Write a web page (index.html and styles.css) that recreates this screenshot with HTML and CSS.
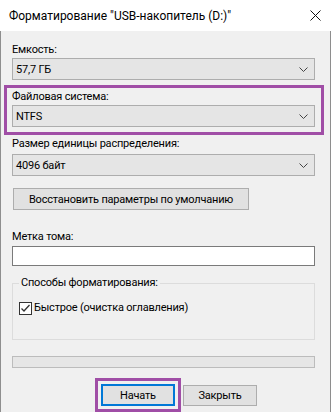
FILE: index.html
```html
<!doctype html>
<html lang="ru">
    <head>
        <title>Форматирование "USB-накопитель (D:)"</title>
        <meta name="viewport" content="width=device-width, initial-scale=1"/>
        <link rel="stylesheet" href="styles.css">
    </head>
    <body>
        <div class="window">
            <div class="titlebar">
                <span class="titlebar__text">Форматирование "USB-накопитель (D:)"</span>
                <svg class="titlebar__close" width="11" height="11" viewBox="0 0 11 11">
                    <path d="M0.5 0.5 L10.5 10.5 M10.5 0.5 L0.5 10.5" stroke="#111" stroke-width="1" fill="none"/>
                </svg>
            </div>
            <div class="dialog">
                <div class="field-label">Емкость:</div>
                <div class="combo">
                    <span>57,7 ГБ</span>
                    <svg class="combo__arrow" width="9" height="5" viewBox="0 0 9 5"><path d="M0.5 0.5 L4.5 4.5 L8.5 0.5" stroke="#444" fill="none"/></svg>
                </div>

                <div class="highlight highlight--group">
                    <div class="field-label">Файловая система:</div>
                    <div class="combo">
                        <span>NTFS</span>
                        <svg class="combo__arrow" width="9" height="5" viewBox="0 0 9 5"><path d="M0.5 0.5 L4.5 4.5 L8.5 0.5" stroke="#444" fill="none"/></svg>
                    </div>
                </div>

                <div class="field-label">Размер единицы распределения:</div>
                <div class="combo">
                    <span>4096 байт</span>
                    <svg class="combo__arrow" width="9" height="5" viewBox="0 0 9 5"><path d="M0.5 0.5 L4.5 4.5 L8.5 0.5" stroke="#444" fill="none"/></svg>
                </div>

                <button class="btn btn--defaults">Восстановить параметры по умолчанию</button>

                <div class="field-label field-label--volume">Метка тома:</div>
                <div class="textbox"></div>

                <fieldset class="group">
                    <legend>Способы форматирования:</legend>
                    <label class="check">
                        <svg class="check__box" width="13" height="13" viewBox="0 0 13 13">
                            <rect x="0.5" y="0.5" width="12" height="12" fill="#fff" stroke="#333"/>
                            <path d="M2.5 6.5 L5 9 L10.5 3" stroke="#333" stroke-width="1.3" fill="none"/>
                        </svg>
                        <span>Быстрое (очистка оглавления)</span>
                    </label>
                </fieldset>

                <div class="progress"></div>

                <div class="actions">
                    <div class="highlight highlight--btn">
                        <button class="btn btn--primary">Начать</button>
                    </div>
                    <button class="btn btn--close">Закрыть</button>
                </div>
            </div>
        </div>
    </body>
</html>
```

FILE: styles.css
```css
body {
    margin: 0;
    font-family: Roboto, "Noto Sans", sans-serif;
    font-size: 11px;
    letter-spacing: -0.2px;
    color: #000;
}
.window {
    width: 331px;
    height: 412px;
    display: flex;
    flex-direction: column;
}
.titlebar {
    height: 31px;
    flex: none;
    background-color: #fff;
    display: flex;
    align-items: center;
    padding: 0 10px 0 9px;
    box-sizing: border-box;
}
.titlebar__text {
    flex: 1;
    font-size: 12px;
    letter-spacing: 0;
    line-height: 16px;
}
.titlebar__close {
    display: block;
}
.dialog {
    flex: 1;
    background-color: #f0f0f0;
    border: 1px solid #8e8e8e;
    border-top: none;
    padding: 11px 15px 0 11px;
}
.field-label {
    line-height: 16px;
    height: 16px;
}
.combo {
    height: 22px;
    box-sizing: border-box;
    border: 1px solid #adadad;
    background-color: #e5e5e5;
    display: flex;
    align-items: center;
    padding: 0 6px 0 3px;
}
.combo span {
    flex: 1;
}
.combo__arrow {
    display: block;
}
.highlight {
    border: 3px solid #a04ea6;
}
.highlight--group {
    margin: 5px -9px 0 -8px;
    padding: 1px 6px 5px 5px;
}
.highlight--group + .field-label {
    margin-top: 1px;
    margin-bottom: 2px;
}
.btn {
    font: inherit;
    letter-spacing: inherit;
    color: #000;
    height: 22px;
    border: 1px solid #adadad;
    background-color: #e1e1e1;
    padding: 0;
    margin: 0;
    white-space: nowrap;
}
.btn--defaults {
    display: block;
    width: 236px;
    margin: 12px 0 0 1px;
}
.field-label--volume {
    margin-top: 19px;
    margin-bottom: 1px;
}
.textbox {
    height: 20px;
    box-sizing: border-box;
    border: 1px solid #7a7a7a;
    background-color: #fff;
}
.group {
    margin: 9px 0 0 0;
    padding: 0 6px;
    border: 1px solid #dcdcdc;
    height: 65px;
    box-sizing: border-box;
}
.group legend {
    padding: 0 2px;
    line-height: 16px;
}
.check {
    display: flex;
    align-items: center;
    gap: 2px;
    margin-top: 9px;
    line-height: 16px;
}
.check__box {
    display: block;
}
.progress {
    height: 12px;
    box-sizing: border-box;
    margin-top: 16px;
    border: 1px solid #bcbcbc;
    background-color: #e6e6e6;
}
.actions {
    display: flex;
    align-items: center;
    gap: 2px;
    margin-top: 10px;
    padding-left: 83px;
}
.highlight--btn {
    padding: 3px;
}
.btn--primary {
    display: block;
    width: 74px;
    border: 2px solid #0078d7;
}
.btn--close {
    width: 74px;
    height: 21px;
    margin-top: 1px;
}
```
